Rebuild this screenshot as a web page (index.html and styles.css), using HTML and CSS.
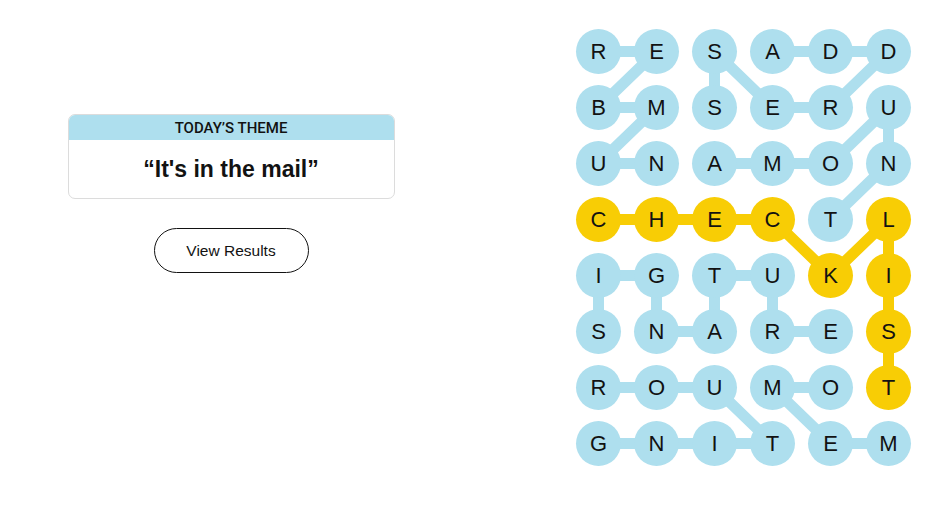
FILE: index.html
```html
<!DOCTYPE html>
<html lang="en">
<head>
<meta charset="utf-8">
<title>Strands</title>
<link rel="stylesheet" href="styles.css">
</head>
<body>
<main class="page">
  <section class="side">
    <div class="theme-card">
      <div class="theme-head">TODAY’S THEME</div>
      <div class="theme-body">“It's in the mail”</div>
    </div>
    <button class="results-btn">View Results</button>
  </section>
  <section class="board">
    <svg class="links" width="336" height="437" viewBox="0 0 336 437">
      <g class="blue">
        <line x1="22.5" y1="22.5" x2="80.5" y2="22.5"/>
        <line x1="80.5" y1="22.5" x2="22.5" y2="78.5"/>
        <line x1="22.5" y1="78.5" x2="80.5" y2="78.5"/>
        <line x1="80.5" y1="78.5" x2="22.5" y2="134.5"/>
        <line x1="22.5" y1="134.5" x2="80.5" y2="134.5"/>
        <line x1="196.5" y1="22.5" x2="254.5" y2="22.5"/>
        <line x1="254.5" y1="22.5" x2="312.5" y2="22.5"/>
        <line x1="312.5" y1="22.5" x2="254.5" y2="78.5"/>
        <line x1="254.5" y1="78.5" x2="196.5" y2="78.5"/>
        <line x1="196.5" y1="78.5" x2="138.5" y2="22.5"/>
        <line x1="138.5" y1="22.5" x2="138.5" y2="78.5"/>
        <line x1="138.5" y1="134.5" x2="196.5" y2="134.5"/>
        <line x1="196.5" y1="134.5" x2="254.5" y2="134.5"/>
        <line x1="254.5" y1="134.5" x2="312.5" y2="78.5"/>
        <line x1="312.5" y1="78.5" x2="312.5" y2="134.5"/>
        <line x1="312.5" y1="134.5" x2="254.5" y2="190.5"/>
        <line x1="22.5" y1="302.5" x2="22.5" y2="246.5"/>
        <line x1="22.5" y1="246.5" x2="80.5" y2="246.5"/>
        <line x1="80.5" y1="246.5" x2="80.5" y2="302.5"/>
        <line x1="80.5" y1="302.5" x2="138.5" y2="302.5"/>
        <line x1="138.5" y1="302.5" x2="138.5" y2="246.5"/>
        <line x1="138.5" y1="246.5" x2="196.5" y2="246.5"/>
        <line x1="196.5" y1="246.5" x2="196.5" y2="302.5"/>
        <line x1="196.5" y1="302.5" x2="254.5" y2="302.5"/>
        <line x1="22.5" y1="358.5" x2="80.5" y2="358.5"/>
        <line x1="80.5" y1="358.5" x2="138.5" y2="358.5"/>
        <line x1="138.5" y1="358.5" x2="196.5" y2="414.5"/>
        <line x1="196.5" y1="414.5" x2="138.5" y2="414.5"/>
        <line x1="138.5" y1="414.5" x2="80.5" y2="414.5"/>
        <line x1="80.5" y1="414.5" x2="22.5" y2="414.5"/>
        <line x1="312.5" y1="414.5" x2="254.5" y2="414.5"/>
        <line x1="254.5" y1="414.5" x2="196.5" y2="358.5"/>
        <line x1="196.5" y1="358.5" x2="254.5" y2="358.5"/>
      </g>
      <g class="gold">
        <line x1="22.5" y1="190.5" x2="196.5" y2="190.5"/>
        <line x1="196.5" y1="190.5" x2="254.5" y2="246.5"/>
        <line x1="254.5" y1="246.5" x2="312.5" y2="190.5"/>
        <line x1="312.5" y1="190.5" x2="312.5" y2="358.5"/>
      </g>
    </svg>
    <div class="grid">
      <span class="cell">R</span><span class="cell">E</span><span class="cell">S</span><span class="cell">A</span><span class="cell">D</span><span class="cell">D</span>
      <span class="cell">B</span><span class="cell">M</span><span class="cell">S</span><span class="cell">E</span><span class="cell">R</span><span class="cell">U</span>
      <span class="cell">U</span><span class="cell">N</span><span class="cell">A</span><span class="cell">M</span><span class="cell">O</span><span class="cell">N</span>
      <span class="cell sp">C</span><span class="cell sp">H</span><span class="cell sp">E</span><span class="cell sp">C</span><span class="cell">T</span><span class="cell sp">L</span>
      <span class="cell">I</span><span class="cell">G</span><span class="cell">T</span><span class="cell">U</span><span class="cell sp">K</span><span class="cell sp">I</span>
      <span class="cell">S</span><span class="cell">N</span><span class="cell">A</span><span class="cell">R</span><span class="cell">E</span><span class="cell sp">S</span>
      <span class="cell">R</span><span class="cell">O</span><span class="cell">U</span><span class="cell">M</span><span class="cell">O</span><span class="cell sp">T</span>
      <span class="cell">G</span><span class="cell">N</span><span class="cell">I</span><span class="cell">T</span><span class="cell">E</span><span class="cell">M</span>
    </div>
  </section>
</main>
</body>
</html>
```
FILE: styles.css
```css
* { box-sizing: border-box; }
html, body { margin: 0; padding: 0; background: #fff; }
body {
  font-family: "Liberation Sans", Arial, sans-serif;
  color: #121212;
}
.page {
  display: flex;
  width: 943px;
  height: 508px;
}
.side {
  width: 462px;
  padding-top: 114px;
  display: flex;
  flex-direction: column;
  align-items: center;
}
.theme-card {
  width: 327px;
  height: 85px;
  border: 1px solid #dcdcdc;
  border-radius: 7px;
  overflow: hidden;
  display: flex;
  flex-direction: column;
}
.theme-head {
  height: 25px;
  background: #aedfee;
  text-align: center;
  font-family: Roboto, "Liberation Sans", Arial, sans-serif;
  font-size: 15px;
  font-weight: 500;
  line-height: 26px;
  color: #121212;
}
.theme-body {
  flex: 1;
  display: flex;
  align-items: center;
  justify-content: center;
  font-size: 23px;
  font-weight: 700;
  padding-bottom: 0;
}
.results-btn {
  margin-top: 29px;
  width: 155px;
  height: 45px;
  border: 1px solid #121212;
  border-radius: 23px;
  background: #fff;
  font-family: "Liberation Sans", Arial, sans-serif;
  font-size: 15.5px;
  color: #121212;
  padding: 0;
}
.board {
  position: relative;
  margin-left: 114px;
  margin-top: 29px;
  width: 336px;
  height: 437px;
}
.links {
  position: absolute;
  left: 0;
  top: 0;
}
.links line {
  stroke-width: 11;
  stroke-linecap: round;
}
.links .blue line { stroke: #aedfee; }
.links .gold line { stroke: #f8cd05; }
.grid {
  position: relative;
  display: grid;
  grid-template-columns: repeat(6, 45px);
  grid-auto-rows: 45px;
  column-gap: 13px;
  row-gap: 11px;
}
.cell {
  width: 45px;
  height: 45px;
  border-radius: 50%;
  background: #aedfee;
  display: flex;
  align-items: center;
  justify-content: center;
  font-size: 22px;
  color: #121212;
}
.cell.sp { background: #f8cd05; }
```
